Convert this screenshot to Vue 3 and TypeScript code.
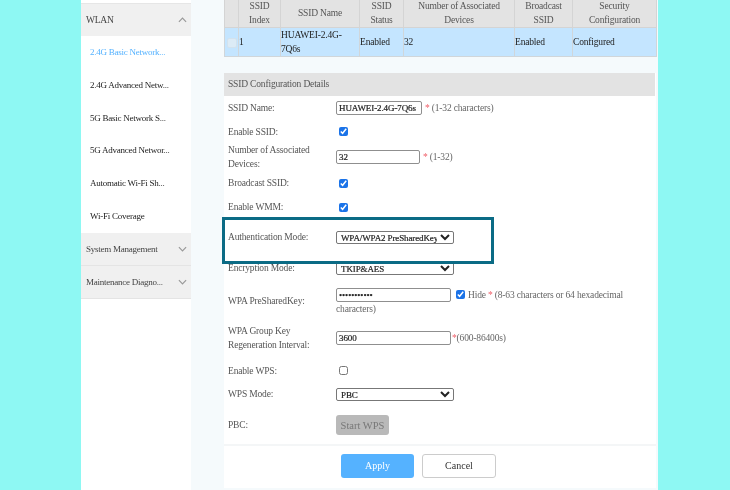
<script setup lang="ts">
const columns = [
  { label: 'SSID Index', value: '1' },
  { label: 'SSID Name', value: 'HUAWEI-2.4G-7Q6s' },
  { label: 'SSID Status', value: 'Enabled' },
  { label: 'Number of Associated Devices', value: '32' },
  { label: 'Broadcast SSID', value: 'Enabled' },
  { label: 'Security Configuration', value: 'Configured' },
]
const wlanItems = [
  '2.4G Basic Network...',
  '2.4G Advanced Netw...',
  '5G Basic Network S...',
  '5G Advanced Networ...',
  'Automatic Wi-Fi Sh...',
  'Wi-Fi Coverage',
]
</script>

<template>
  <div class="page">
    <div class="window">
      <aside class="sidebar">
        <div class="group first">
          <span>WLAN</span>
          <svg class="chev" viewBox="0 0 10 6" width="9" height="6"><path d="M1 5l4-4 4 4" /></svg>
        </div>
        <div
          v-for="(item, i) in wlanItems"
          :key="item"
          class="item"
          :class="{ active: i === 0 }"
        >{{ item }}</div>
        <div class="group">
          <span>System Management</span>
          <svg class="chev" viewBox="0 0 10 6" width="9" height="6"><path d="M1 1l4 4 4-4" /></svg>
        </div>
        <div class="group">
          <span>Maintenance Diagno...</span>
          <svg class="chev" viewBox="0 0 10 6" width="9" height="6"><path d="M1 1l4 4 4-4" /></svg>
        </div>
      </aside>

      <main class="main">
        <table class="ssid">
          <colgroup>
            <col class="c0" /><col class="c1" /><col class="c2" /><col class="c3" />
            <col class="c4" /><col class="c5" /><col class="c6" />
          </colgroup>
          <thead>
            <tr>
              <th></th>
              <th v-for="c in columns" :key="c.label">{{ c.label }}</th>
            </tr>
          </thead>
          <tbody>
            <tr>
              <td class="check"><span class="ghost"></span></td>
              <td v-for="c in columns" :key="c.label">{{ c.value }}</td>
            </tr>
          </tbody>
        </table>

        <section class="details">
          <h2 class="title">SSID Configuration Details</h2>

          <div class="row r1">
            <label>SSID Name:</label>
            <div class="field">
              <input class="text short" value="HUAWEI-2.4G-7Q6s" />
              <span class="hint"><b>*</b> (1-32 characters)</span>
            </div>
          </div>
          <div class="row r2">
            <label>Enable SSID:</label>
            <div class="field"><input type="checkbox" class="box" checked /></div>
          </div>
          <div class="row r3">
            <label>Number of Associated<br />Devices:</label>
            <div class="field">
              <input class="text mid" value="32" />
              <span class="hint"><b>*</b> (1-32)</span>
            </div>
          </div>
          <div class="row r4">
            <label>Broadcast SSID:</label>
            <div class="field"><input type="checkbox" class="box" checked /></div>
          </div>
          <div class="row r5">
            <label>Enable WMM:</label>
            <div class="field"><input type="checkbox" class="box" checked /></div>
          </div>
          <div class="row r6">
            <label>Authentication Mode:</label>
            <div class="field">
              <select class="pick"><option>WPA/WPA2 PreSharedKey</option></select>
            </div>
          </div>
          <div class="row r7">
            <label>Encryption Mode:</label>
            <div class="field">
              <select class="pick"><option>TKIP&amp;AES</option></select>
            </div>
          </div>
          <div class="row r8">
            <label>WPA PreSharedKey:</label>
            <div class="field wrap">
              <div class="line">
                <input class="text wide" type="password" value="12345678901" />
                <input type="checkbox" class="box hide" checked />
                <span class="hint">Hide <b>*</b> (8-63 characters or 64 hexadecimal</span>
              </div>
              <span class="hint">characters)</span>
            </div>
          </div>
          <div class="row r9">
            <label>WPA Group Key<br />Regeneration Interval:</label>
            <div class="field">
              <input class="text wide" value="3600" />
              <span class="hint tight"><b>*</b>(600-86400s)</span>
            </div>
          </div>
          <div class="row r10">
            <label>Enable WPS:</label>
            <div class="field"><input type="checkbox" class="box" /></div>
          </div>
          <div class="row r11">
            <label>WPS Mode:</label>
            <div class="field">
              <select class="pick"><option>PBC</option></select>
            </div>
          </div>
          <div class="row r12">
            <label>PBC:</label>
            <div class="field"><button class="start" type="button">Start WPS</button></div>
          </div>

          <div class="actions">
            <button class="apply" type="button">Apply</button>
            <button class="cancel" type="button">Cancel</button>
          </div>
        </section>

        <div class="callout"></div>
      </main>
    </div>
  </div>
</template>

<style>
html, body { margin: 0; background: #8ef8f3; }
</style>

<style scoped>
.page {
  width: 730px;
  height: 490px;
  overflow: hidden;
  background: #8ef8f3;
  padding: 0 72px 0 81px;
  box-sizing: border-box;
  font-family: "Liberation Serif", "Times New Roman", serif;
  font-size: 9.5px;
  letter-spacing: -0.17px;
  color: #555;
  filter: blur(0.4px);
}
.window {
  display: flex;
  height: 490px;
}
.sidebar {
  width: 110px;
  flex: none;
  background: #fff;
  padding-top: 3px;
  box-sizing: border-box;
}
.group {
  height: 33px;
  display: flex;
  align-items: center;
  justify-content: space-between;
  padding: 0 4px 0 5px;
  background: #f0f0f0;
  border-bottom: 1px solid #e4e4e4;
  box-sizing: border-box;
  font-size: 9px;
  letter-spacing: -0.25px;
  color: #444;
}
.group.first {
  font-size: 9.5px;
  border-bottom: 0;
  border-top: 1px solid #e6e6e6;
}
.chev path { fill: none; stroke: #999; stroke-width: 1.3; }
.item {
  height: 32.8px;
  line-height: 32.8px;
  padding-left: 9px;
  font-size: 9px;
  letter-spacing: -0.25px;
  color: #222;
  white-space: nowrap;
}
.item.active { color: #55b2ff; }

.main {
  position: relative;
  flex: 1;
  background: #f5fafc;
  padding-left: 33px;
  padding-right: 1px;
  box-sizing: border-box;
}
.ssid {
  width: 432px;
  table-layout: fixed;
  border-collapse: collapse;
  margin: 0;
}
.c0 { width: 14px; }
.c1 { width: 42px; }
.c2 { width: 79px; }
.c3 { width: 44px; }
.c4 { width: 111px; }
.c5 { width: 58px; }
.c6 { width: 84px; }
.ssid th {
  height: 27px;
  padding: 0;
  font-weight: 400;
  line-height: 13.5px;
  background: #e3e3e3;
  color: #555;
  border: 1px solid #d4d4d4;
  border-top: 0;
}
.ssid td {
  height: 28px;
  padding: 0;
  line-height: 14px;
  background: #c4e5ff;
  color: #222;
  border: 1px solid #d0d6da;
}
.check { text-align: center; }
.ghost {
  display: inline-block;
  width: 8px;
  height: 8px;
  border: 1px solid #d2e2ee;
  border-radius: 2px;
  background: #dcebf6;
  vertical-align: middle;
}
.details {
  width: 432px;
  margin-top: 16px;
  background: #fff;
}
.title {
  margin: 0 1px 0 0;
  height: 23px;
  line-height: 23px;
  padding-left: 4px;
  background: #e3e3e3;
  font-size: 9.5px;
  font-weight: 400;
  color: #555;
}
.row {
  display: flex;
  align-items: center;
  box-sizing: border-box;
}
.row label {
  width: 112px;
  flex: none;
  padding-left: 4px;
  line-height: 14px;
  box-sizing: border-box;
}
.field {
  display: flex;
  align-items: center;
  gap: 3px;
  white-space: nowrap;
}
.field.wrap {
  flex-direction: column;
  align-items: flex-start;
  gap: 0;
  padding-top: 2px;
}
.line {
  display: flex;
  align-items: center;
  gap: 3px;
}
.r1 { height: 24px; }
.r2 { height: 23px; }
.r3 { height: 28px; }
.r4 { height: 24px; }
.r5 { height: 24px; }
.r6 { height: 36px; }
.r7 { height: 26px; }
.r8 { height: 40px; }
.r9 { height: 34px; }
.r10 { height: 27px; padding-top: 4px; }
.r11 { height: 24px; }
.r12 { height: 38px; }
.text {
  height: 12px;
  padding: 0 2px;
  margin: 0;
  border: 1px solid #8f8f8f;
  border-radius: 2px;
  background: #fff;
  font: 9px "Liberation Serif", serif;
  letter-spacing: -0.1px;
  -webkit-text-stroke: 0.2px #222;
  color: #222;
  box-sizing: content-box;
  outline: 0;
}
.short { width: 80px; }
.mid { width: 78px; }
.wide { width: 109px; }
.box {
  width: 9px;
  height: 9px;
  margin: 0 0 0 3px;
  accent-color: #1b73e8;
}
.box.hide { margin-left: 2px; margin-top: -1px; }
.hint { line-height: 14px; color: #666; }
.hint b { font-weight: 400; color: #f0606a; }
.hint.tight { margin-left: -2px; }
.pick {
  width: 116px;
  height: 11px;
  padding: 0;
  margin: 0;
  border: 1px solid #777;
  border-radius: 2px;
  background: #fff;
  font: 9px "Liberation Serif", serif;
  letter-spacing: -0.12px;
  -webkit-text-stroke: 0.2px #222;
  color: #222;
  box-sizing: content-box;
}
.start {
  width: 53px;
  height: 20px;
  padding: 0;
  border: 0;
  border-radius: 3px;
  background: #b9b9b9;
  font: 10.5px "Liberation Serif", serif;
  color: #777;
}
.actions {
  height: 44px;
  display: flex;
  align-items: center;
  gap: 8px;
  padding: 0 0 3px 117px;
  border-top: 2px solid #f4f6f7;
  box-sizing: border-box;
}
.apply, .cancel {
  width: 73px;
  height: 24px;
  padding: 0;
  border-radius: 3px;
  font: 10px "Liberation Serif", serif;
}
.apply {
  border: 0;
  background: #55b2ff;
  color: #fff;
}
.cancel {
  width: 74px;
  border: 1px solid #ccc;
  background: #fff;
  color: #333;
}
.callout {
  position: absolute;
  left: 31px;
  top: 217px;
  width: 272px;
  height: 47px;
  border: 3px solid #0b6b85;
  box-sizing: border-box;
  pointer-events: none;
}
</style>
